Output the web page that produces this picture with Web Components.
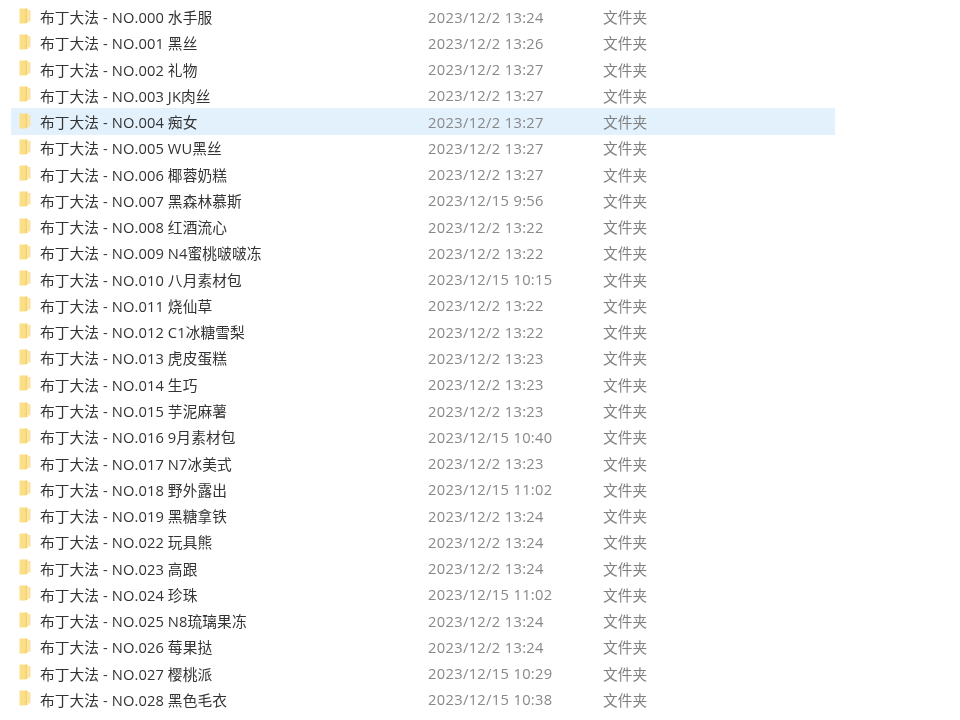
<!DOCTYPE html>
<html lang="zh">
<head>
<meta charset="utf-8">
<title>文件夹</title>
<style>
  html, body { margin: 0; background: #fff; }
</style>
</head>
<body>
<file-list></file-list>
<script>
customElements.define('folder-icon', class extends HTMLElement {
  constructor() {
    super();
    this.attachShadow({mode: 'open'}).innerHTML = `
      <style>
        :host { display: block; width: 12px; height: 16px; margin-top: -2px; }
        svg { display: block; }
      </style>
      <svg width="12" height="16" viewBox="0 0 12 16">
        <path d="M.5 .5H7V15.500H.5z" fill="#fbdf86"/>
        <path d="M6.500 .5H8.500V15H6.500z" fill="#f5d06f"/>
        <path d="M8.500 2H11.500V13.500H8.500z" fill="#fae3a0"/>
      </svg>
    `;
  }
});

customElements.define('file-row', class extends HTMLElement {
  static observedAttributes = ['date', 'kind'];
  constructor() {
    super();
    this.attachShadow({mode: 'open'}).innerHTML = `
      <style>
        :host {
          display: grid;
          grid-template-columns: 12px 9px 388px 175px 1fr;
          align-items: center;
          height: 26.27px;
          padding-left: 8px;
          box-sizing: border-box;
          font-size: 14.7px;
        }
        :host([selected]) { background: #e3f1fd; }
        folder-icon { grid-column: 1; }
        #name { grid-column: 3; color: #333; white-space: nowrap; letter-spacing: .1px; }
        #date { grid-column: 4; color: #888; white-space: nowrap; letter-spacing: .33px; }
        #kind { grid-column: 5; color: #808080; white-space: nowrap; }
      </style>
      <folder-icon></folder-icon>
      <span id="name"><slot></slot></span>
      <span id="date"></span>
      <span id="kind"></span>
    `;
  }
  attributeChangedCallback() {
    this.shadowRoot.querySelector('#date').textContent = this.getAttribute('date');
    this.shadowRoot.querySelector('#kind').textContent = this.getAttribute('kind');
  }
});

const files = [
  ['000 水手服', '2023/12/2 13:24'],
  ['001 黑丝', '2023/12/2 13:26'],
  ['002 礼物', '2023/12/2 13:27'],
  ['003 JK肉丝', '2023/12/2 13:27'],
  ['004 痴女', '2023/12/2 13:27'],
  ['005 WU黑丝', '2023/12/2 13:27'],
  ['006 椰蓉奶糕', '2023/12/2 13:27'],
  ['007 黑森林慕斯', '2023/12/15 9:56'],
  ['008 红酒流心', '2023/12/2 13:22'],
  ['009 N4蜜桃啵啵冻', '2023/12/2 13:22'],
  ['010 八月素材包', '2023/12/15 10:15'],
  ['011 烧仙草', '2023/12/2 13:22'],
  ['012 C1冰糖雪梨', '2023/12/2 13:22'],
  ['013 虎皮蛋糕', '2023/12/2 13:23'],
  ['014 生巧', '2023/12/2 13:23'],
  ['015 芋泥麻薯', '2023/12/2 13:23'],
  ['016 9月素材包', '2023/12/15 10:40'],
  ['017 N7冰美式', '2023/12/2 13:23'],
  ['018 野外露出', '2023/12/15 11:02'],
  ['019 黑糖拿铁', '2023/12/2 13:24'],
  ['022 玩具熊', '2023/12/2 13:24'],
  ['023 高跟', '2023/12/2 13:24'],
  ['024 珍珠', '2023/12/15 11:02'],
  ['025 N8琉璃果冻', '2023/12/2 13:24'],
  ['026 莓果挞', '2023/12/2 13:24'],
  ['027 樱桃派', '2023/12/15 10:29'],
  ['028 黑色毛衣', '2023/12/15 10:38'],
];

customElements.define('file-list', class extends HTMLElement {
  constructor() {
    super();
    const rows = files.map(([name, date], i) =>
      `<file-row date="${date}" kind="文件夹"${i === 4 ? ' selected' : ''}>布丁大法 - NO.${name}</file-row>`
    ).join('');
    this.attachShadow({mode: 'open'}).innerHTML = `
      <style>
        :host {
          display: block;
          height: 720px;
          overflow: hidden;
          box-sizing: border-box;
          padding: 3.4px 125px 0 11px;
          font-family: "Open Sans", "Noto Sans CJK SC", sans-serif;
          filter: blur(0.4px);
        }
      </style>
      ${rows}
    `;
  }
});
</script>
</body>
</html>
